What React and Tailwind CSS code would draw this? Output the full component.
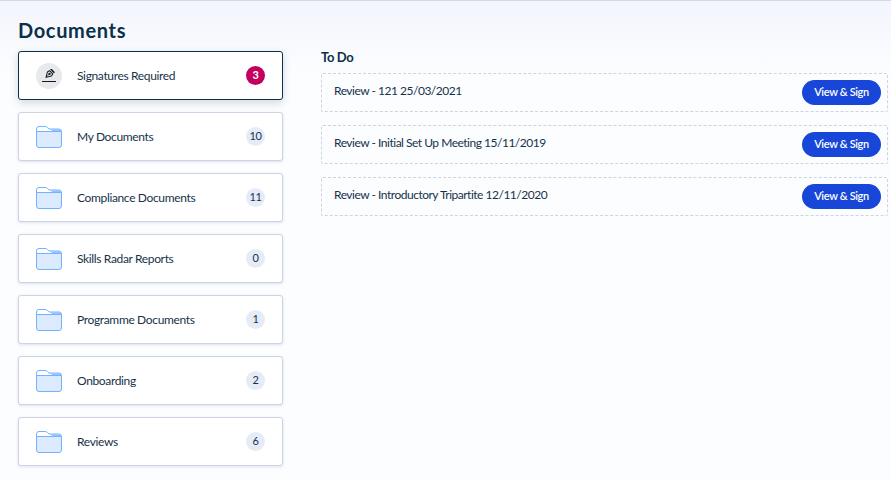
const FONT = "font-['Lato','Liberation_Sans',sans-serif]";

const FOLDERS = [
  { name: "My Documents", count: 10 },
  { name: "Compliance Documents", count: 11 },
  { name: "Skills Radar Reports", count: 0 },
  { name: "Programme Documents", count: 1 },
  { name: "Onboarding", count: 2 },
  { name: "Reviews", count: 6 },
];

const TODOS = [
  "Review - 121 25/03/2021",
  "Review - Initial Set Up Meeting 15/11/2019",
  "Review - Introductory Tripartite 12/11/2020",
];

function FolderIcon() {
  return (
    <svg width="26" height="22" viewBox="0 0 26 22" fill="none">
      <path d="M0.5 7 V3 Q0.5 0.5 3 0.5 H9 Q10.5 0.5 11.5 1.5 L13 3 H23 Q25.5 3 25.5 5.5 V8" fill="#ffffff" stroke="#74b1ff" />
      <path d="M14 3.2 H23 Q25 3.2 25.2 5.5 H17 Z" fill="#93c3ff" />
      <path d="M0.5 5.5 H25.5 V19 Q25.5 21.5 23 21.5 H3 Q0.5 21.5 0.5 19 Z" fill="#dcebff" stroke="#74b1ff" />
    </svg>
  );
}

function PenIcon() {
  return (
    <svg width="14" height="13" viewBox="0 0 14 13" fill="none" stroke="#111827" strokeWidth="1">
      <g transform="translate(8 4.4) rotate(45)">
        <path d="M-2.3 -1.6 H2.3 L2.8 0.8 L0 5.6 L-2.8 0.8 Z" strokeLinejoin="round" />
        <path d="M-2.6 -3.6 H2.6" strokeWidth="1.6" />
        <path d="M0 5.6 V1.4" strokeWidth="0.7" />
        <circle cx="0" cy="0.7" r="0.7" />
      </g>
      <path d="M0 12.5 H14" />
    </svg>
  );
}

function Card({ icon, name, count, active }) {
  return (
    <div className={`flex items-center h-[49px] bg-white rounded-[3px] border pl-[17px] pr-[17px] ${active ? "border-[#0b3049] shadow-[0_3px_8px_rgba(11,48,73,0.18)]" : "border-[#cdd3e6] shadow-[0_1px_3px_rgba(60,70,120,0.15)]"}`}>
      <div className="w-[26px] flex items-center justify-center">{icon}</div>
      <div className="ml-[15px] flex-1 text-[12px] tracking-[-0.35px] text-[#17324a]">{name}</div>
      <div className={`w-[19px] h-[19px] rounded-full flex items-center justify-center text-[11px] tracking-[-0.3px] pb-[1px] ${active ? "bg-[#c4005f] text-white font-bold" : "bg-[#e6ebf8] text-[#17324a]"}`}>{count}</div>
    </div>
  );
}

export default function App() {
  return (
    <div className={`${FONT} w-[891px] h-[481px] overflow-hidden border-t border-[#d5d9ea] bg-gradient-to-b from-[#f3f5fd] to-[#fcfdff] to-[15%] pl-[18px] pr-[3px]`}>
      <h1 className="text-[20px] leading-[24px] font-bold text-[#0b3049] mt-[17px] tracking-[0.65px]">Documents</h1>
      <div className="flex mt-[9px]">
        <div className="w-[265px] flex flex-col gap-[12px]">
          <Card
            active
            name="Signatures Required"
            count={3}
            icon={<div className="w-[26px] h-[26px] shrink-0 rounded-full bg-[#e7e9eb] flex items-center justify-center"><PenIcon /></div>}
          />
          {FOLDERS.map(f => <Card key={f.name} name={f.name} count={f.count} icon={<FolderIcon />} />)}
        </div>
        <div className="ml-[38px] flex-1">
          <h2 className="text-[13px] leading-[14px] font-bold tracking-[-0.35px] text-[#0b3049] mt-[-1px] mb-[9px]">To Do</h2>
          <div className="flex flex-col gap-[13px]">
            {TODOS.map(t => (
              <div key={t} className="flex justify-between h-[39px] border border-dashed border-[#cfd3de] rounded-[2px] pl-[12px] pr-[6px]">
                <span className="text-[12px] tracking-[-0.49px] leading-[14px] mt-[10px] text-[#17324a]">{t}</span>
                <button className="self-center w-[79px] h-[25px] rounded-full bg-[#1746d9] text-white text-[11px] tracking-[-0.35px] font-semibold">View &amp; Sign</button>
              </div>
            ))}
          </div>
        </div>
      </div>
    </div>
  );
}
